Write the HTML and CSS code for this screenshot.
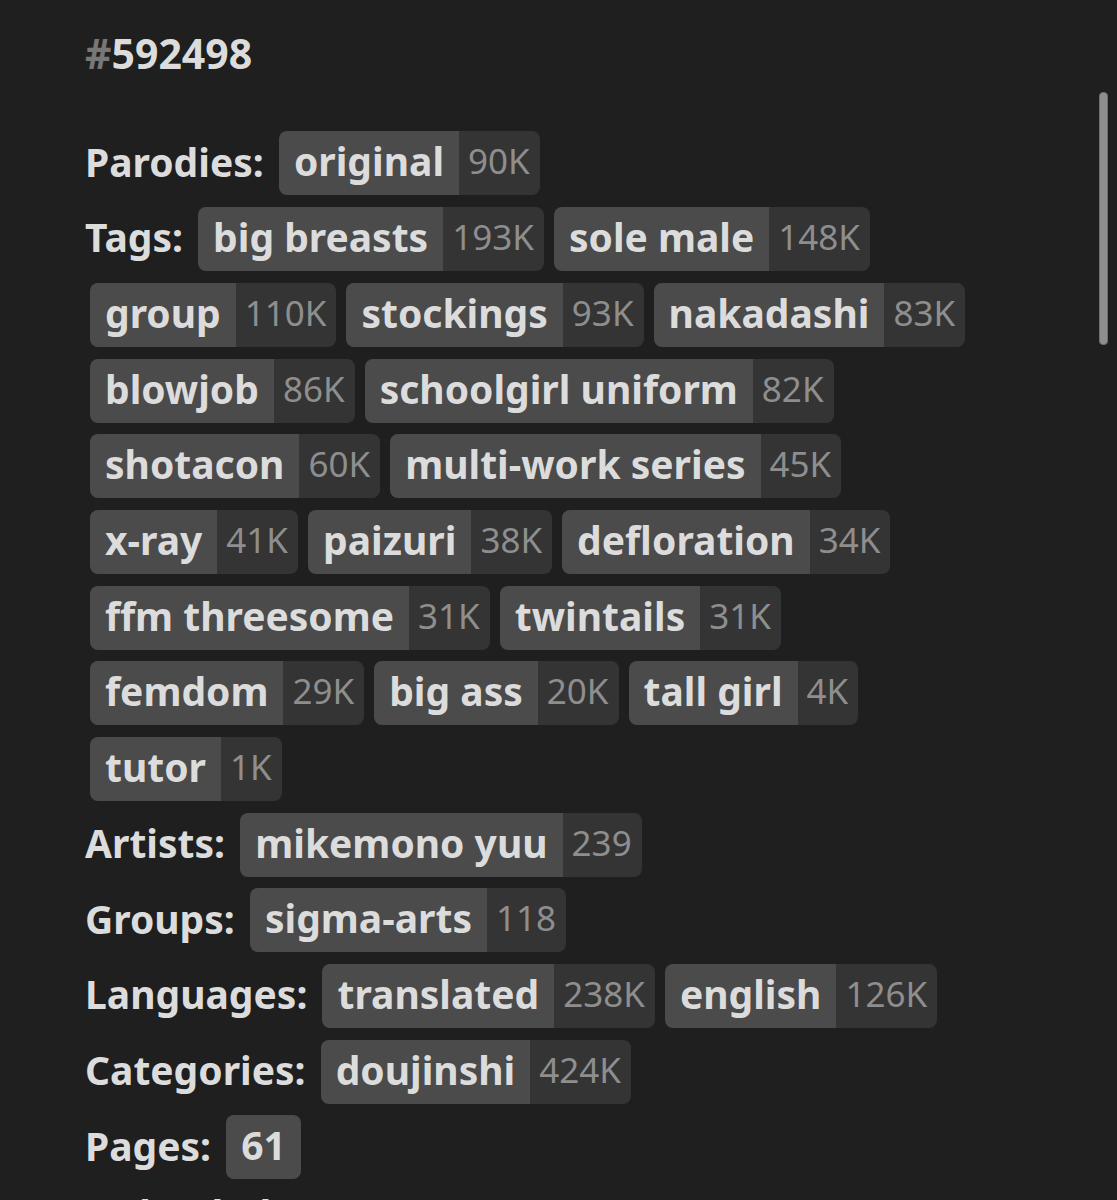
FILE: index.html
```html
<!DOCTYPE html>
<html lang="en">
<head>
    <meta charset="UTF-8">
    <meta name="viewport" content="width=device-width, initial-scale=1.0">
    <title>#592498</title>
    <link rel="stylesheet" href="styles.css">
</head>
<body>
    <div class="info">
        <h3 class="gallery-id"><span class="hash">#</span>592498</h3>

        <div class="field">
            <span class="label">Parodies:</span>
            <span class="tags">
                <a class="tag"><span class="name">original</span><span class="count">90K</span></a>
            </span>
        </div>

        <div class="field">
            <span class="label">Tags:</span>
            <span class="tags">
                <a class="tag"><span class="name">big breasts</span><span class="count">193K</span></a>
                <a class="tag"><span class="name">sole male</span><span class="count">148K</span></a>
                <a class="tag"><span class="name">group</span><span class="count">110K</span></a>
                <a class="tag"><span class="name">stockings</span><span class="count">93K</span></a>
                <a class="tag"><span class="name">nakadashi</span><span class="count">83K</span></a>
                <a class="tag"><span class="name">blowjob</span><span class="count">86K</span></a>
                <a class="tag"><span class="name">schoolgirl uniform</span><span class="count">82K</span></a>
                <a class="tag"><span class="name">shotacon</span><span class="count">60K</span></a>
                <a class="tag"><span class="name">multi-work series</span><span class="count">45K</span></a>
                <a class="tag"><span class="name">x-ray</span><span class="count">41K</span></a>
                <a class="tag"><span class="name">paizuri</span><span class="count">38K</span></a>
                <a class="tag"><span class="name">defloration</span><span class="count">34K</span></a>
                <a class="tag"><span class="name">ffm threesome</span><span class="count">31K</span></a>
                <a class="tag"><span class="name">twintails</span><span class="count">31K</span></a>
                <a class="tag"><span class="name">femdom</span><span class="count">29K</span></a>
                <a class="tag"><span class="name">big ass</span><span class="count">20K</span></a>
                <a class="tag"><span class="name">tall girl</span><span class="count">4K</span></a>
                <a class="tag"><span class="name">tutor</span><span class="count">1K</span></a>
            </span>
        </div>

        <div class="field">
            <span class="label">Artists:</span>
            <span class="tags">
                <a class="tag"><span class="name">mikemono yuu</span><span class="count">239</span></a>
            </span>
        </div>

        <div class="field">
            <span class="label">Groups:</span>
            <span class="tags">
                <a class="tag"><span class="name">sigma-arts</span><span class="count">118</span></a>
            </span>
        </div>

        <div class="field">
            <span class="label">Languages:</span>
            <span class="tags">
                <a class="tag"><span class="name">translated</span><span class="count">238K</span></a>
                <a class="tag"><span class="name">english</span><span class="count">126K</span></a>
            </span>
        </div>

        <div class="field">
            <span class="label">Categories:</span>
            <span class="tags">
                <a class="tag"><span class="name">doujinshi</span><span class="count">424K</span></a>
            </span>
        </div>

        <div class="field">
            <span class="label">Pages:</span>
            <span class="tags">
                <a class="tag"><span class="name">61</span></a>
            </span>
        </div>

        <div class="field uploaded">
            <span class="label">Uploaded:</span>
            <time>1 hour ago</time>
        </div>
    </div>

    <div class="scroll-thumb"></div>
</body>
</html>
```

FILE: styles.css
```css
/* Dark page, no real scrollbar */
html, body {
    overflow: hidden;
}

body {
    margin: 0;
    background: #1f1f1f;
    color: #dcdcdc;
    font-family: "Noto Sans", "Open Sans", sans-serif;
}

.info {
    padding: 26px 85px 0;
}

/* Gallery number */
.gallery-id {
    margin: 0 0 38px;
    font-size: 41px;
    font-weight: 700;
    line-height: 1.36;
}

.hash {
    color: #777;
}

/* One row per field, tags flow inline and wrap */
.field {
    font-size: 39px;
    line-height: 60px;
}

.label {
    font-weight: 700;
}

/* no whitespace gaps between tags, margins do the spacing */
.tags {
    font-size: 0;
    line-height: 0;
}

.tag {
    display: inline-flex;
    margin: 11.7px 5px 0;
    border-radius: 8px;
    overflow: hidden;
    font-size: 39px;
    line-height: 60px;
    color: #dcdcdc;
    text-decoration: none;
}

.tag .name {
    background: #4b4b4b;
    font-weight: 700;
    padding: 0 15px 4px;
}

.tag .count {
    background: #343434;
    color: #8e8e8e;
    font-size: 35px;
    padding: 0 10px 4px 9px;
}

/* Last row has no tag boxes */
.uploaded {
    line-height: 1.36;
    margin-top: 8px;
}

.uploaded time {
    font-weight: 400;
}

/* Overlay scrollbar thumb */
.scroll-thumb {
    position: fixed;
    top: 92px;
    right: 9px;
    width: 7px;
    height: 251px;
    border-radius: 4px;
    background: #8f8f8f;
    border: 1px solid #6e6e6e;
}
```
